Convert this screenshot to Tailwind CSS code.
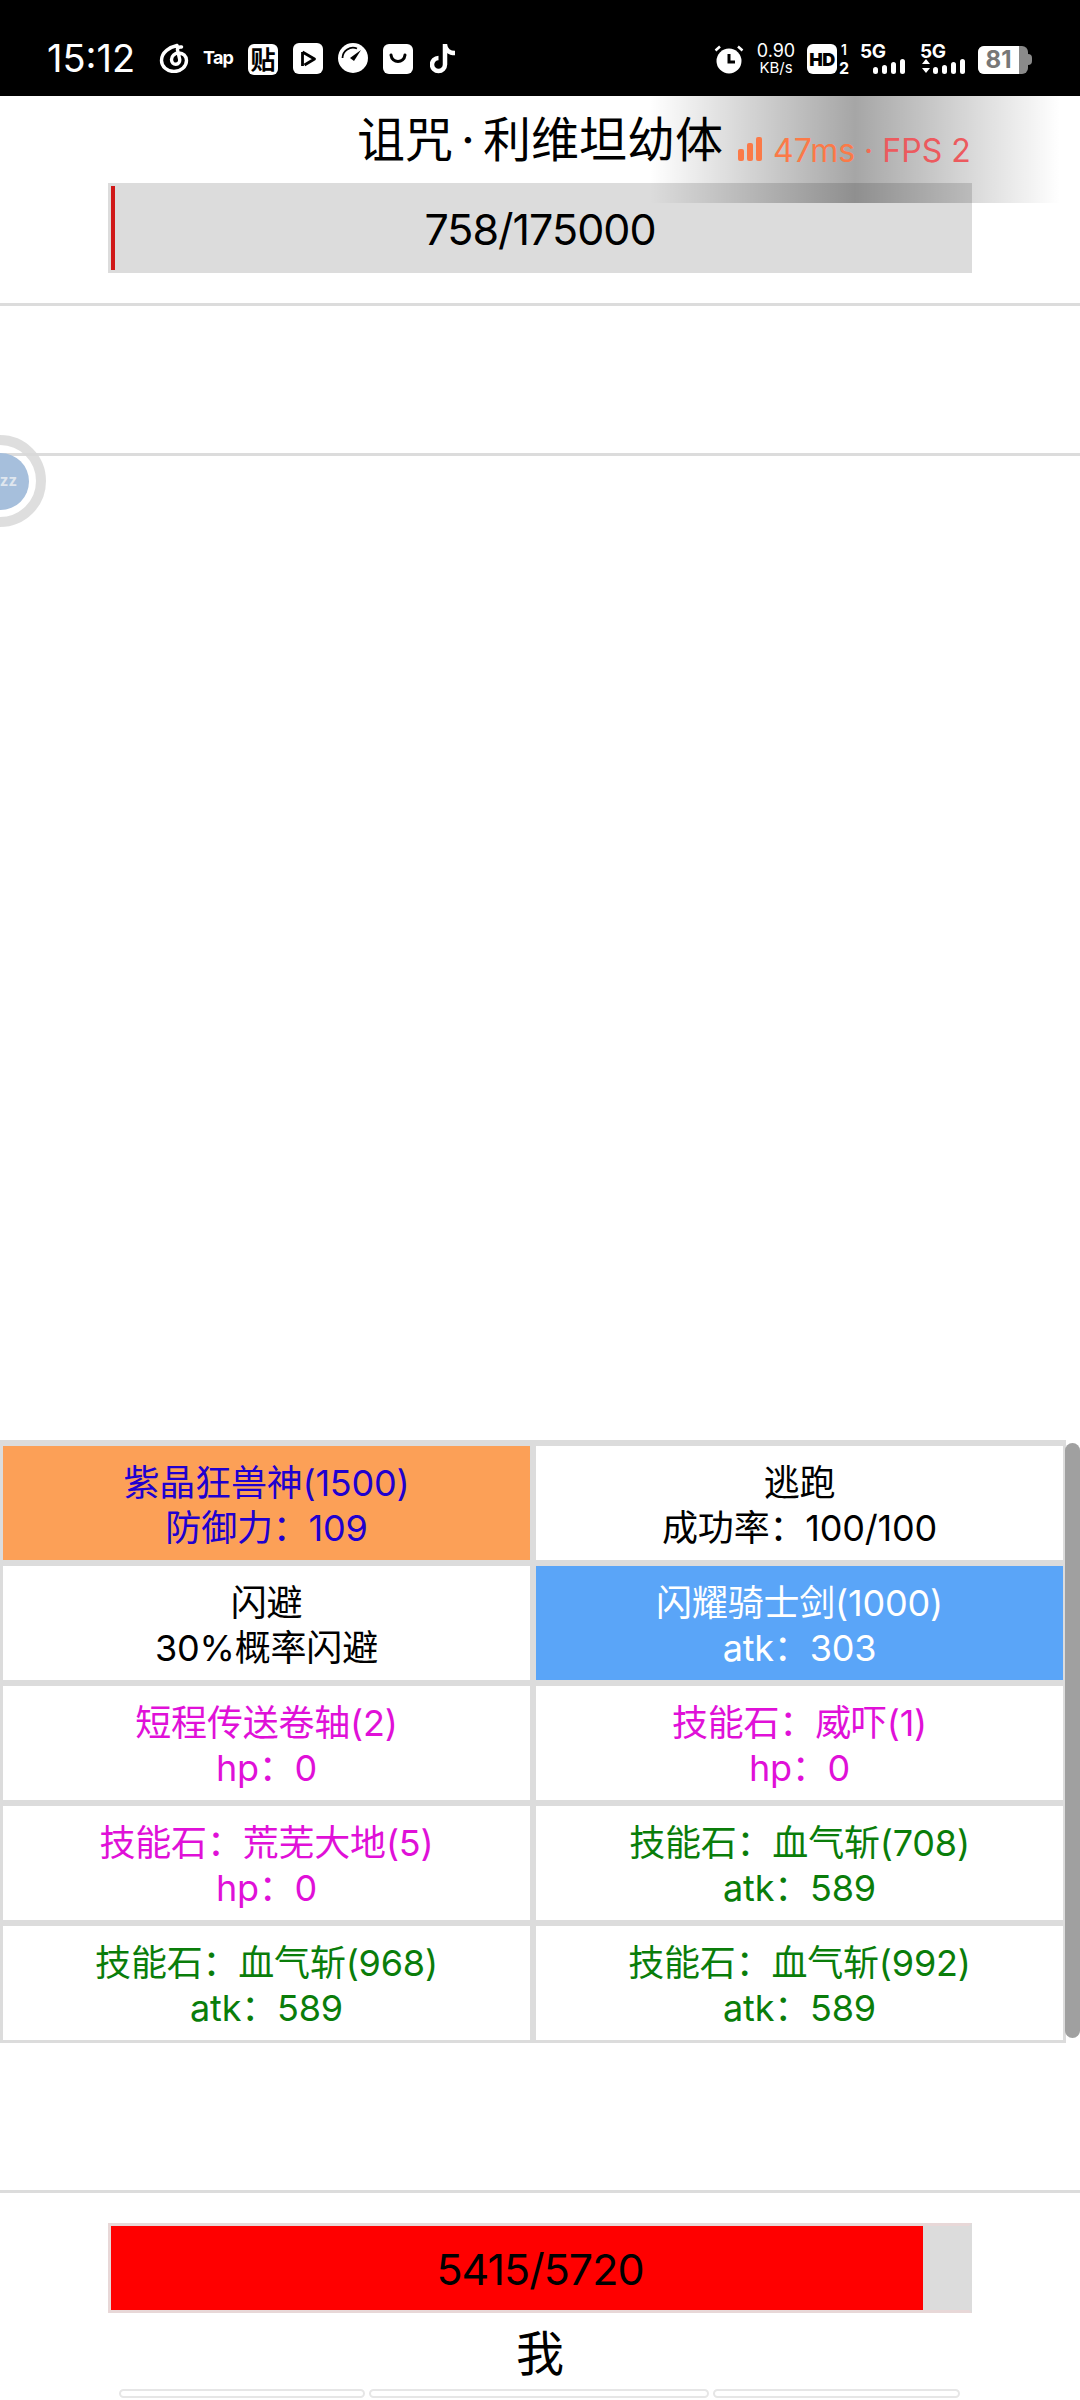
<!DOCTYPE html>
<html lang="zh-CN">
<head>
  <meta charset="UTF-8" />
  <meta name="viewport" content="width=device-width, initial-scale=1" />
  <title>诅咒·利维坦幼体</title>
  <script src="https://cdn.jsdelivr.net/npm/@tailwindcss/browser@4"></script>
</head>
<body class="bg-white">
<div class="relative w-[1080px] h-[2400px] overflow-hidden bg-white text-black font-['Inter','Noto_Sans_CJK_SC',sans-serif]">

  <!-- status bar -->
  <div class="relative h-[96px] bg-black text-white">
    <div class="absolute left-[47px] top-[35px] text-[38px] leading-[46px]">15:12</div>

    <svg class="absolute left-[159px] top-[43px]" width="30" height="30" viewBox="0 0 30 30" fill="none" stroke="#fff" stroke-width="3.4" stroke-linecap="round">
      <path d="M18 2.500C11 4 2.500 9 2.500 17.500a12.500 11 0 0 0 25 0c0-4.500-3.500-7.500-7.500-7.500-4.500 0-7.500 3-7.500 6.500 0 3 2 4.800 4.300 4.800 2.700 0 4.200-2.300 3.900-5L18.500 7c-.4-2 1.200-3.400 4-3" />
    </svg>
    <div class="absolute left-[203px] top-[46px] text-[18px] leading-[24px] font-bold tracking-[-0.8px]">Tap</div>
    <div class="absolute left-[248px] top-[44px] w-[30px] h-[31px] rounded-[6px] bg-white flex items-center justify-center text-black text-[25px] leading-[30px] font-bold">贴</div>
    <svg class="absolute left-[293px] top-[43px]" width="30" height="31" viewBox="0 0 30 31">
      <rect width="30" height="31" rx="6" fill="#fff" />
      <path d="M9.500 9v14M9.500 9l12 7-10 6" fill="none" stroke="#000" stroke-width="2.800" stroke-linejoin="round" />
    </svg>
    <svg class="absolute left-[338px] top-[43px]" width="30" height="30" viewBox="0 0 30 30">
      <circle cx="15" cy="15" r="15" fill="#fff" />
      <path d="M4.500 15A10.500 10.500 0 0 1 19 5.500" fill="none" stroke="#000" stroke-width="1.800" />
      <path d="M23 7l-7 11-4-3z" fill="#000" />
    </svg>
    <svg class="absolute left-[383px] top-[44px]" width="30" height="30" viewBox="0 0 30 30">
      <rect width="30" height="30" rx="6" fill="#fff" />
      <path d="M8 11c1 8.500 13 8.500 14 0" fill="none" stroke="#000" stroke-width="3" stroke-linecap="round" />
    </svg>
    <svg class="absolute left-[430px] top-[43px]" width="28" height="31" viewBox="0 0 28 31" fill="none" stroke="#fff" stroke-width="4.500">
      <path d="M15 1v20.500a6.500 6.500 0 1 1-6.500-6.500M15 2c.5 4.500 4 8 10 8" />
    </svg>

    <svg class="absolute left-[714px] top-[44px]" width="30" height="30" viewBox="0 0 30 30">
      <circle cx="15" cy="17" r="12.500" fill="#fff" />
      <path d="M15 10v8h6" fill="none" stroke="#000" stroke-width="3" />
      <path d="M1.500 6.500L6 2.500M28.500 6.500L24 2.500" stroke="#fff" stroke-width="2.500" />
    </svg>
    <div class="absolute left-[750px] top-[41px] w-[52px] text-center text-[18px] leading-[20px]">0.90</div>
    <div class="absolute left-[750px] top-[59px] w-[52px] text-center text-[15px] leading-[17px]">KB/s</div>
    <div class="absolute left-[807px] top-[44px] w-[30px] h-[30px] rounded-[6px] bg-white flex items-center justify-center text-black text-[18px] font-black tracking-[-0.5px]">HD</div>
    <div class="absolute left-[841px] top-[42px] text-[14px] leading-[16px] font-semibold">1</div>
    <div class="absolute left-[839px] top-[60px] text-[16px] leading-[16px] font-bold">2</div>
    <div class="absolute left-[860px] top-[42px] text-[19px] leading-[20px] font-bold tracking-[-0.5px]">5G</div>
    <div class="absolute left-[873px] top-[59px] h-[15px] flex items-end gap-[4px]">
      <div class="w-[5px] h-[7px] rounded-full bg-white"></div>
      <div class="w-[5px] h-[9px] rounded-full bg-white"></div>
      <div class="w-[5px] h-[12px] rounded-full bg-white"></div>
      <div class="w-[5px] h-[15px] rounded-full bg-white"></div>
    </div>
    <div class="absolute left-[920px] top-[42px] text-[19px] leading-[20px] font-bold tracking-[-0.5px]">5G</div>
    <svg class="absolute left-[921px] top-[59px]" width="10" height="15" viewBox="0 0 10 15" fill="#fff">
      <path d="M5 0l4 5H1zM1 9h8l-4 5z" />
    </svg>
    <div class="absolute left-[933px] top-[59px] h-[15px] flex items-end gap-[4px]">
      <div class="w-[5px] h-[7px] rounded-full bg-white"></div>
      <div class="w-[5px] h-[9px] rounded-full bg-white"></div>
      <div class="w-[5px] h-[12px] rounded-full bg-white"></div>
      <div class="w-[5px] h-[15px] rounded-full bg-white"></div>
    </div>
    <div class="absolute left-[978px] top-[46px] w-[50px] h-[28px] rounded-[6px] overflow-hidden bg-[#8a8a8a]">
      <div class="w-[41px] h-full bg-white flex items-center justify-center text-[#777] text-[24px] font-bold">81</div>
    </div>
    <div class="absolute left-[1028px] top-[54px] w-[4px] h-[11px] rounded-r-full bg-[#8a8a8a]"></div>
  </div>

  <!-- enemy -->
  <div class="h-[87px] flex items-center justify-center text-[48px] leading-[87px]"><span>诅咒</span><span class="mx-[8px]">·</span><span>利维坦幼体</span></div>
  <div class="relative mx-[108px] h-[90px] bg-[#dcdcdc] border-[3px] border-[#dcdcdc]">
    <div class="absolute inset-y-0 left-0 w-[4px] bg-[#d01818]"></div>
    <div class="relative h-full pt-[3px] flex items-center justify-center text-[43px] tracking-[-1px]">758/175000</div>
  </div>
  <div class="mt-[30px] h-[153px] border-y-[3px] border-[#dcdcdc]"></div>

  <!-- actions -->
  <div class="mt-[984px] w-[1066px] border-t-[3px] border-[#dcdcdc] grid grid-cols-2 text-[36px] leading-[45px] tracking-[-0.2px] text-center">
    <div class="h-[120px] pt-[6px] border-[3px] border-[#dcdcdc] bg-[#fca057] text-[#2000d0] flex flex-col justify-center"><div>紫晶狂兽神(1500)</div><div>防御力：109</div></div>
    <div class="h-[120px] pt-[6px] border-[3px] border-[#dcdcdc] bg-white text-black flex flex-col justify-center"><div>逃跑</div><div>成功率：100/100</div></div>
    <div class="h-[120px] pt-[6px] border-[3px] border-[#dcdcdc] bg-white text-black flex flex-col justify-center"><div>闪避</div><div>30%概率闪避</div></div>
    <div class="h-[120px] pt-[6px] border-[3px] border-[#dcdcdc] bg-[#5aa5f8] text-white flex flex-col justify-center"><div>闪耀骑士剑(1000)</div><div>atk：303</div></div>
    <div class="h-[120px] pt-[6px] border-[3px] border-[#dcdcdc] bg-white text-[#e010d8] flex flex-col justify-center"><div>短程传送卷轴(2)</div><div>hp：0</div></div>
    <div class="h-[120px] pt-[6px] border-[3px] border-[#dcdcdc] bg-white text-[#e010d8] flex flex-col justify-center"><div>技能石：威吓(1)</div><div>hp：0</div></div>
    <div class="h-[120px] pt-[6px] border-[3px] border-[#dcdcdc] bg-white text-[#e010d8] flex flex-col justify-center"><div>技能石：荒芜大地(5)</div><div>hp：0</div></div>
    <div class="h-[120px] pt-[6px] border-[3px] border-[#dcdcdc] bg-white text-[#0a7d0a] flex flex-col justify-center"><div>技能石：血气斩(708)</div><div>atk：589</div></div>
    <div class="h-[120px] pt-[6px] border-[3px] border-[#dcdcdc] bg-white text-[#0a7d0a] flex flex-col justify-center"><div>技能石：血气斩(968)</div><div>atk：589</div></div>
    <div class="h-[120px] pt-[6px] border-[3px] border-[#dcdcdc] bg-white text-[#0a7d0a] flex flex-col justify-center"><div>技能石：血气斩(992)</div><div>atk：589</div></div>
  </div>

  <!-- player -->
  <div class="mt-[147px] h-[3px] bg-[#dcdcdc]"></div>
  <div class="relative mx-[108px] mt-[30px] h-[90px] bg-[#dcdcdc] border-[3px] border-[#e8d8d8] border-r-[#dcdcdc]">
    <div class="absolute inset-y-0 left-0 w-[812px] bg-[#ff0000]"></div>
    <div class="relative h-full pt-[3px] flex items-center justify-center text-[43px] tracking-[-1px]">5415/5720</div>
  </div>
  <div class="h-[76px] pt-[5px] flex items-center justify-center text-[48px]">我</div>
  <div class="flex ml-[119px] gap-[4px]">
    <div class="w-[246px] h-[9px] bg-white border-2 border-[#e6e6e6] rounded-[5px]"></div>
    <div class="w-[340px] h-[9px] bg-white border-2 border-[#e6e6e6] rounded-[5px]"></div>
    <div class="w-[247px] h-[9px] bg-white border-2 border-[#e6e6e6] rounded-[5px]"></div>
  </div>

  <!-- ping overlay -->
  <div class="absolute left-[650px] top-[96px] w-[410px] h-[107px] bg-linear-to-r from-transparent via-black/35 to-transparent"></div>
  <div class="absolute left-[738px] top-[137px] flex items-end gap-[3px] h-[24px]">
    <div class="w-[6px] h-[12px] rounded-[2px] bg-[#fb7a48]"></div>
    <div class="w-[6px] h-[18px] rounded-[2px] bg-[#fb7a48]"></div>
    <div class="w-[6px] h-[24px] rounded-[2px] bg-[#fb7a48]"></div>
  </div>
  <div class="absolute left-[773px] top-[133px] text-[32px] leading-[36px] whitespace-nowrap"><span class="text-[#fb7a48]">47ms</span><span class="text-[#f56a52]"> · </span><span class="text-[#ec5a5e]">FPS 2</span></div>

  <!-- floating ball -->
  <div class="absolute left-[-46px] top-[435px] w-[92px] h-[92px] rounded-full border-[10px] border-[#d8d8d8]/85"></div>
  <div class="absolute left-[-28px] top-[453px] w-[57px] h-[57px] rounded-full bg-[#a6bfdc] flex items-center justify-end pr-[12px] text-[#dfe6ee] text-[15px] font-bold">zz</div>

  <!-- scrollbar -->
  <div class="absolute left-[1065px] top-[1443px] w-[15px] h-[595px] rounded-full bg-[#a0a0a0]"></div>
</div>
</body>
</html>
